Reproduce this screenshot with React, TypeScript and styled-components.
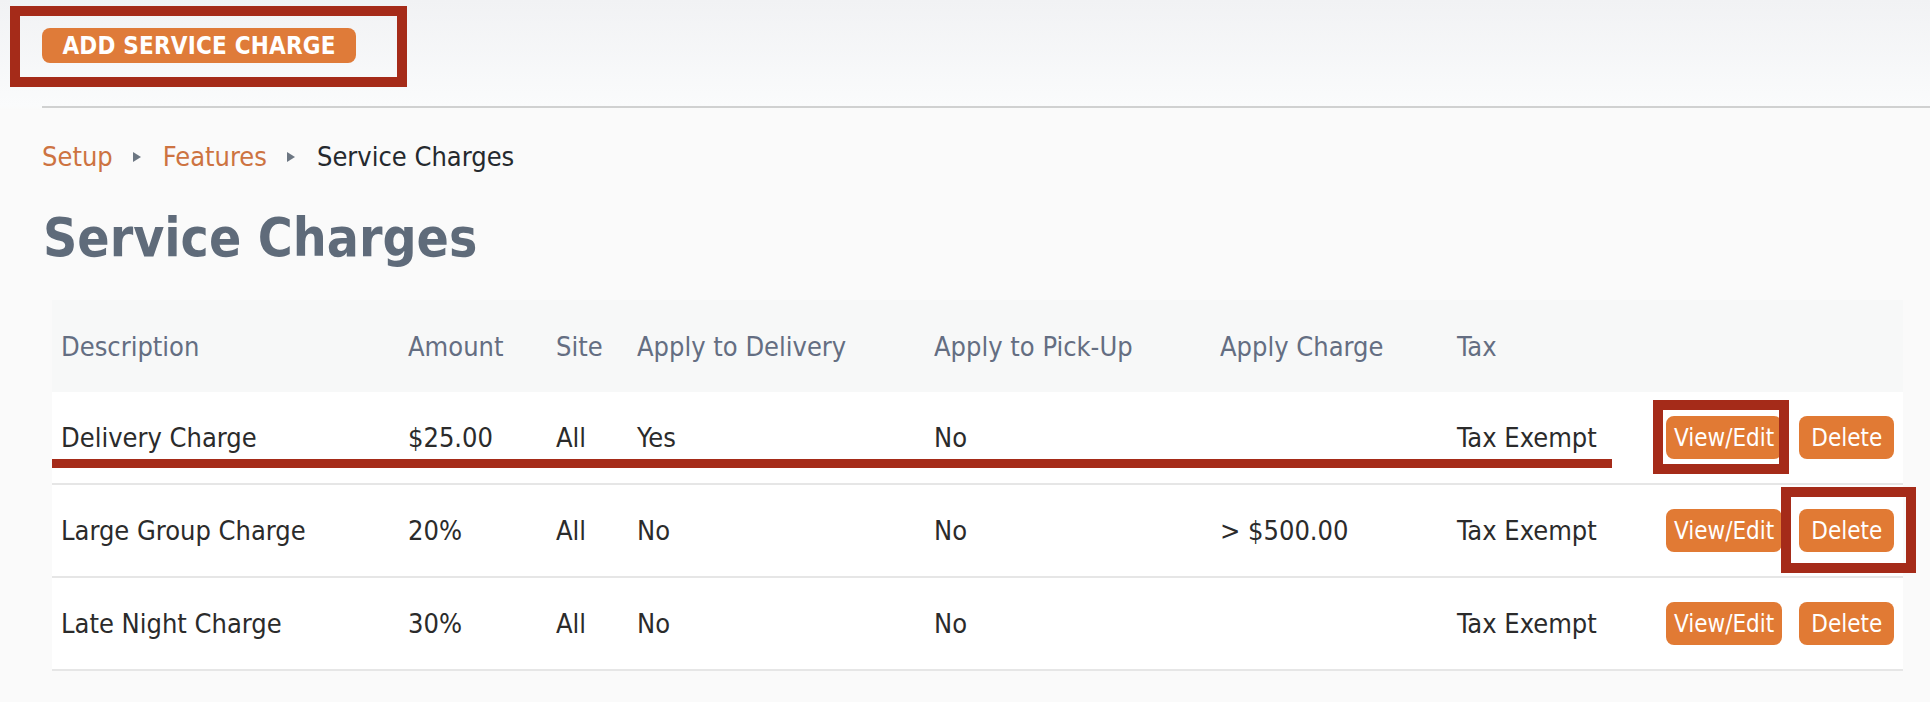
import styled, { createGlobalStyle } from "styled-components";

const GlobalStyle = createGlobalStyle`
  html, body {
    margin: 0;
    padding: 0;
  }
  body {
    background: #fafafa;
    font-family: "DejaVu Sans Condensed", "DejaVu Sans", "Liberation Sans", sans-serif;
    font-stretch: semi-condensed;
    color: #2b2b2b;
  }
  button {
    font-family: inherit;
    font-stretch: inherit;
  }
`;

const Page = styled.div`
  width: 1930px;
  min-height: 702px;
  background: linear-gradient(#f1f2f4 0px, #fafbfc 106px, #fafafa 110px);
`;

const TopBar = styled.div`
  height: 106px;
  padding-left: 42px;
  padding-top: 28px;
  box-sizing: border-box;
`;

// red annotation frame drawn over a control
const Mark = styled.span<{ $t: number; $r: number; $b: number; $l: number }>`
  position: absolute;
  top: ${(p) => -p.$t}px;
  right: ${(p) => -p.$r}px;
  bottom: ${(p) => -p.$b}px;
  left: ${(p) => -p.$l}px;
  border: 10px solid #a52b19;
  pointer-events: none;
`;

const Marked = styled.span`
  position: relative;
  display: inline-block;
`;

const AddButton = styled.button`
  display: block;
  height: 35px;
  width: 314px;
  padding: 0;
  border: none;
  border-radius: 8px;
  background: #df7b39;
  color: #fff;
  font-weight: bold;
  font-size: 24px;
  letter-spacing: 0.2px;
`;

const Divider = styled.div`
  margin-left: 42px;
  border-top: 2px solid #d0d1d1;
`;

const Content = styled.div`
  padding: 0 27px 0 42px;
`;

const Crumbs = styled.nav`
  display: flex;
  align-items: center;
  margin-top: 32px;
  font-size: 27px;
  line-height: 34px;
`;

const CrumbLink = styled.a`
  color: #cd7341;
  text-decoration: none;
`;

const CrumbCurrent = styled.span`
  color: #25292e;
`;

const CrumbArrow = styled.span`
  width: 0;
  height: 0;
  margin: 0 22px 0 20px;
  border-top: 5px solid transparent;
  border-bottom: 5px solid transparent;
  border-left: 8px solid #6c7682;
`;

const Title = styled.h1`
  margin: 31px 0 0 1px;
  font-size: 53px;
  line-height: 66px;
  font-weight: bold;
  color: #5f6b7a;
`;

const TableWrap = styled.div`
  position: relative;
  margin: 29px 0 0 10px;
`;

const Underline = styled.span`
  position: absolute;
  top: 159px;
  left: 0;
  width: 1560px;
  height: 9px;
  background: #a52b19;
`;

const Table = styled.table`
  width: 1851px;
  table-layout: fixed;
  border-collapse: collapse;
  font-size: 27px;
`;

const HeadCell = styled.th<{ $w?: number }>`
  width: ${(p) => (p.$w ? `${p.$w - 9}px` : "auto")};
  height: 92px;
  padding: 0 0 0 9px;
  background: #f7f8f8;
  color: #646e82;
  font-weight: normal;
  text-align: left;
  white-space: nowrap;
`;

const Cell = styled.td`
  height: 91px;
  padding: 0 0 0 9px;
  background: #fff;
  border-bottom: 2px solid #e6e6e6;
  color: #2b2b2b;
  white-space: nowrap;
`;

const Actions = styled.div`
  display: flex;
  gap: 17px;
`;

const RowButton = styled.button<{ $pad: number }>`
  height: 43px;
  padding: 0 ${(p) => p.$pad}px;
  border: none;
  border-radius: 8px;
  background: #e17a34;
  color: #fff;
  font-size: 24px;
`;

type Charge = {
  description: string;
  amount: string;
  site: string;
  delivery: string;
  pickup: string;
  charge: string;
  tax: string;
};

const charges: Charge[] = [
  { description: "Delivery Charge", amount: "$25.00", site: "All", delivery: "Yes", pickup: "No", charge: "", tax: "Tax Exempt" },
  { description: "Large Group Charge", amount: "20%", site: "All", delivery: "No", pickup: "No", charge: "> $500.00", tax: "Tax Exempt" },
  { description: "Late Night Charge", amount: "30%", site: "All", delivery: "No", pickup: "No", charge: "", tax: "Tax Exempt" },
];

export default function App() {
  return (
    <Page>
      <GlobalStyle />
      <TopBar>
        <Marked>
          <AddButton>ADD SERVICE CHARGE</AddButton>
          <Mark $t={22} $r={51} $b={24} $l={32} />
        </Marked>
      </TopBar>
      <Divider />
      <Content>
        <Crumbs>
          <CrumbLink href="#">Setup</CrumbLink>
          <CrumbArrow />
          <CrumbLink href="#">Features</CrumbLink>
          <CrumbArrow />
          <CrumbCurrent>Service Charges</CrumbCurrent>
        </Crumbs>
        <Title>Service Charges</Title>
        <TableWrap>
          <Table>
            <thead>
              <tr>
                <HeadCell $w={347}>Description</HeadCell>
                <HeadCell $w={148}>Amount</HeadCell>
                <HeadCell $w={81}>Site</HeadCell>
                <HeadCell $w={297}>Apply to Delivery</HeadCell>
                <HeadCell $w={286}>Apply to Pick-Up</HeadCell>
                <HeadCell $w={237}>Apply Charge</HeadCell>
                <HeadCell $w={209}>Tax</HeadCell>
                <HeadCell />
              </tr>
            </thead>
            <tbody>
              {charges.map((c, i) => (
                <tr key={c.description}>
                  <Cell>{c.description}</Cell>
                  <Cell>{c.amount}</Cell>
                  <Cell>{c.site}</Cell>
                  <Cell>{c.delivery}</Cell>
                  <Cell>{c.pickup}</Cell>
                  <Cell>{c.charge}</Cell>
                  <Cell>{c.tax}</Cell>
                  <Cell>
                    <Actions>
                      <Marked>
                        <RowButton $pad={8}>View/Edit</RowButton>
                        {i === 0 && <Mark $t={16} $r={7} $b={15} $l={13} />}
                      </Marked>
                      <Marked>
                        <RowButton $pad={12}>Delete</RowButton>
                        {i === 1 && <Mark $t={22} $r={22} $b={21} $l={18} />}
                      </Marked>
                    </Actions>
                  </Cell>
                </tr>
              ))}
            </tbody>
          </Table>
          <Underline />
        </TableWrap>
      </Content>
    </Page>
  );
}
